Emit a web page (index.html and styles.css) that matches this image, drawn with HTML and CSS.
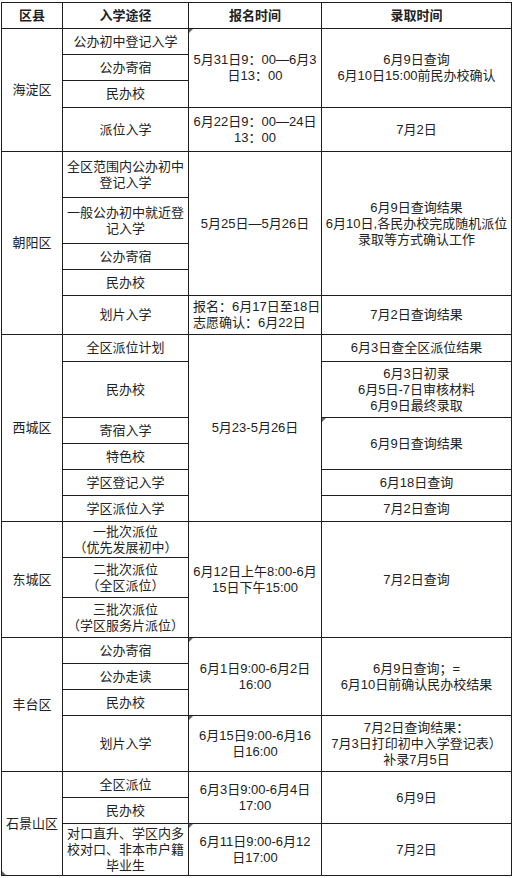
FILE: index.html
```html
<!DOCTYPE html>
<html lang="zh-CN">
<head>
<meta charset="utf-8">
<title>北京各区初中入学时间表</title>
<link rel="stylesheet" href="styles.css">
</head>
<body>
<table class="sched">
  <colgroup>
    <col class="c1"><col class="c2"><col class="c3"><col class="c4">
  </colgroup>
  <thead>
    <tr class="h26"><th>区县</th><th>入学途径</th><th>报名时间</th><th>录取时间</th></tr>
  </thead>
  <tbody>
    <tr class="h26">
      <td rowspan="4">海淀区</td>
      <td>公办初中登记入学</td>
      <td rowspan="3" class="mark">5月31日9：00—6月3<br>日13：00</td>
      <td rowspan="3">6月9日查询<br>6月10日15:00前民办校确认</td>
    </tr>
    <tr class="h26"><td>公办寄宿</td></tr>
    <tr class="h27"><td>民办校</td></tr>
    <tr class="h44"><td>派位入学</td><td>6月22日9：00—24日<br>13：00</td><td>7月2日</td></tr>

    <tr class="h46">
      <td rowspan="5">朝阳区</td>
      <td>全区范围内公办初中<br>登记入学</td>
      <td rowspan="4">5月25日—5月26日</td>
      <td rowspan="4">6月9日查询结果<br>6月10日,各民办校完成随机派位<br>录取等方式确认工作</td>
    </tr>
    <tr class="h46"><td>一般公办初中就近登<br>记入学</td></tr>
    <tr class="h26"><td>公办寄宿</td></tr>
    <tr class="h26"><td>民办校</td></tr>
    <tr class="h39"><td>划片入学</td><td class="left">报名：6月17日至18日<br>志愿确认：6月22日</td><td>7月2日查询结果</td></tr>

    <tr class="h27">
      <td rowspan="6">西城区</td>
      <td>全区派位计划</td>
      <td rowspan="6">5月23-5月26日</td>
      <td>6月3日查全区派位结果</td>
    </tr>
    <tr class="h56"><td>民办校</td><td>6月3日初录<br>6月5日-7日审核材料<br>6月9日最终录取</td></tr>
    <tr class="h26"><td>寄宿入学</td><td rowspan="2" class="mark">6月9日查询结果</td></tr>
    <tr class="h26"><td>特色校</td></tr>
    <tr class="h26"><td>学区登记入学</td><td>6月18日查询</td></tr>
    <tr class="h26"><td>学区派位入学</td><td>7月2日查询</td></tr>

    <tr class="h36">
      <td rowspan="3">东城区</td>
      <td>一批次派位<br>（优先发展初中）</td>
      <td rowspan="3">6月12日上午8:00-6月<br>15日下午15:00</td>
      <td rowspan="3">7月2日查询</td>
    </tr>
    <tr class="h40"><td>二批次派位<br>（全区派位）</td></tr>
    <tr class="h40"><td>三批次派位<br>（学区服务片派位）</td></tr>

    <tr class="h26">
      <td rowspan="4">丰台区</td>
      <td>公办寄宿</td>
      <td rowspan="3" class="mark">6月1日9:00-6月2日<br>16:00</td>
      <td rowspan="3">6月9日查询；=<br>6月10日前确认民办校结果</td>
    </tr>
    <tr class="h26"><td>公办走读</td></tr>
    <tr class="h26"><td>民办校</td></tr>
    <tr class="h56"><td>划片入学</td><td class="mark">6月15日9:00-6月16<br>日16:00</td><td>7月2日查询结果：<br>7月3日打印初中入学登记表）<br>补录7月5日</td></tr>

    <tr class="h26">
      <td rowspan="3" class="mark-bl">石景山区</td>
      <td>全区派位</td>
      <td rowspan="2">6月3日9:00-6月4日<br>17:00</td>
      <td rowspan="2">6月9日</td>
    </tr>
    <tr class="h26"><td>民办校</td></tr>
    <tr class="h52"><td>对口直升、学区内多<br>校对口、非本市户籍<br>毕业生</td><td class="mark">6月11日9:00-6月12<br>日17:00</td><td>7月2日</td></tr>
  </tbody>
</table>
</body>
</html>
```

FILE: styles.css
```css
html, body {
  margin: 0;
  padding: 0;
  background: #ffffff;
}
body {
  padding: 2px 0 0 1px;
  font-family: "Liberation Sans", "Noto Sans CJK SC", sans-serif;
  font-size: 13px;
  color: #222222;
}
.sched {
  border-collapse: collapse;
  table-layout: fixed;
  width: 510px;
}
.c1 { width: 61px; }
.c2 { width: 126px; }
.c3 { width: 133px; }
.c4 { width: 190px; }
.sched th,
.sched td {
  border: 1px solid #1e1e1e;
  padding: 0 1px;
  text-align: center;
  vertical-align: middle;
  line-height: 16px;
  white-space: nowrap;
  overflow: hidden;
  font-weight: 400;
}
.sched th {
  font-weight: 700;
}
.sched td.left {
  text-align: left;
  padding-left: 4px;
}
.h26 { height: 26px; }
.h27 { height: 27px; }
.h36 { height: 36px; }
.h39 { height: 39px; }
.h40 { height: 40px; }
.h44 { height: 44px; }
.h46 { height: 46px; }
.h52 { height: 52px; }
.h56 { height: 56px; }
.mark, .mark-bl {
  position: relative;
}
.mark::before {
  content: "";
  position: absolute;
  left: 0;
  top: 0;
  border-top: 4px solid #666;
  border-right: 4px solid transparent;
}
.mark-bl::after {
  content: "";
  position: absolute;
  left: 0;
  bottom: 0;
  border-bottom: 4px solid #666;
  border-right: 4px solid transparent;
}
```
